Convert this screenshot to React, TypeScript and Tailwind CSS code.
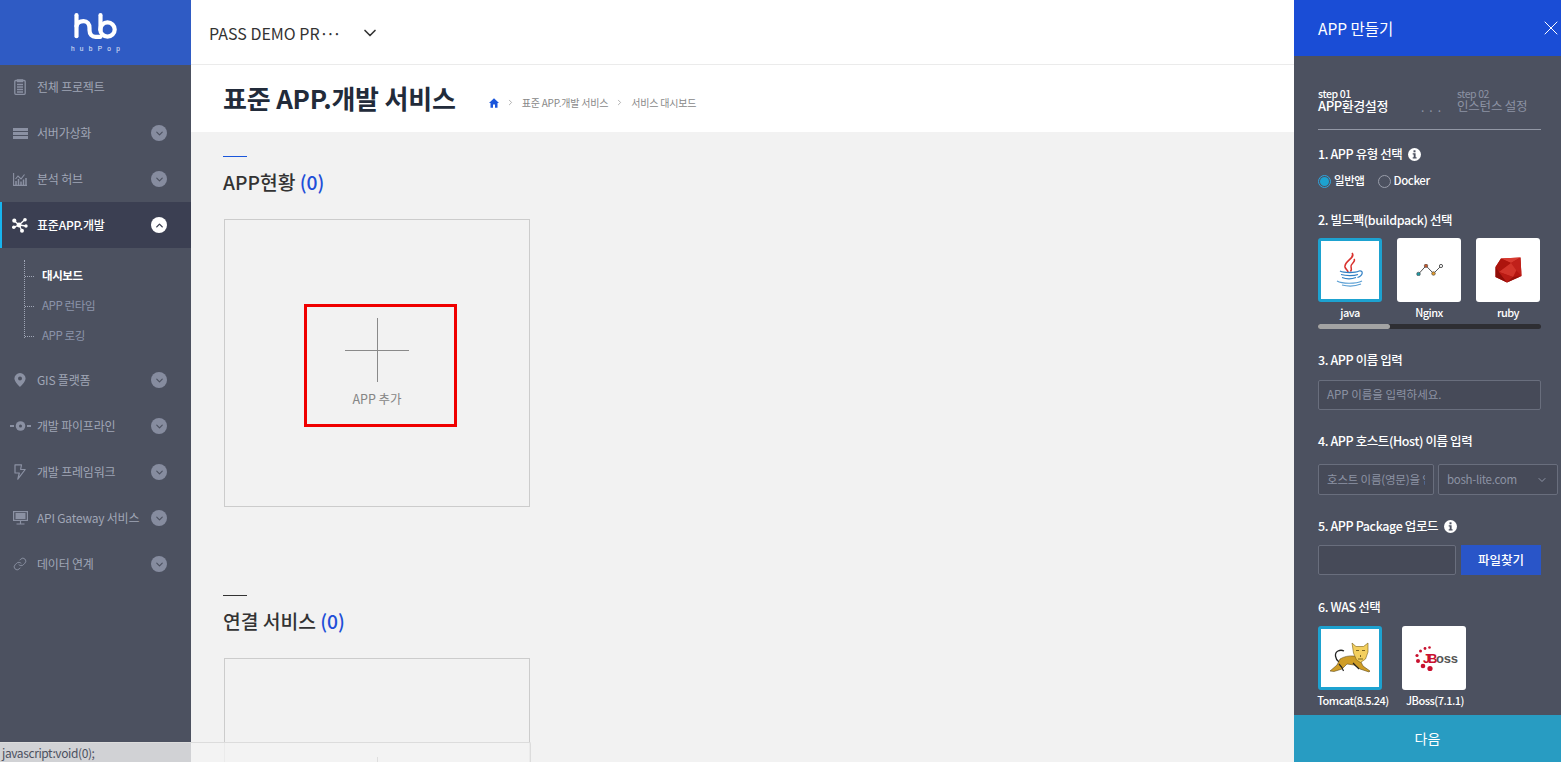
import React from "react";
import { ChevronDown, ChevronUp, ChevronRight, X, Link } from "lucide-react";

const ClipIcon = () => (
  <svg width="12" height="16" viewBox="0 0 12 16" fill="none" stroke="#8b91a3" strokeWidth="1.3">
    <rect x=".8" y="1.500" width="10.400" height="13.800" rx="1" />
    <path d="M3.500 1h5v1.600h-5zM3 5.500h6M3 8h6M3 10.500h6M3 13h6" />
  </svg>
);
const ServerIcon = () => (
  <svg width="15" height="11" viewBox="0 0 15 11" fill="#8b91a3">
    <rect x="0" y="0" width="15" height="3" />
    <rect x="0" y="4" width="15" height="3" />
    <rect x="0" y="8" width="15" height="3" />
  </svg>
);
const ChartIcon = () => (
  <svg width="14" height="13" viewBox="0 0 14 13" fill="none" stroke="#8b91a3" strokeWidth="1.100">
    <path d="M.6 0v12.400H14" />
    <path d="M2.500 6l2.500-3 3 3 3.500-4.500" />
    <path d="M3 12V8M5.500 12V6M8 12V8.500M10.500 12V6.500M13 12V5" strokeWidth="1.500" />
  </svg>
);
const NetIcon = () => (
  <svg width="16" height="15" viewBox="0 0 16 15" fill="#fff">
    <path d="M2.300 2.700L7 7l6-5.500M1.500 9.300L7 7l3 5.700M7 7l7 1" fill="none" stroke="#fff" strokeWidth="1.300" />
    <circle cx="2.300" cy="2.700" r="2.100" />
    <circle cx="13" cy="1.800" r="1.800" />
    <circle cx="1.800" cy="9.300" r="1.800" />
    <circle cx="7" cy="7" r="2.400" />
    <circle cx="10" cy="12.700" r="2" />
    <circle cx="14" cy="8" r="1.700" />
  </svg>
);
const PinIcon = () => (
  <svg width="12" height="14" viewBox="0 0 12 14">
    <path fillRule="evenodd" fill="#8b91a3" d="M6 0a5.600 5.600 0 0 1 5.600 5.600C11.600 9 6 14 6 14S.4 9 .4 5.600A5.600 5.600 0 0 1 6 0zm0 3.600a2 2 0 1 0 0 4 2 2 0 0 0 0-4z" />
  </svg>
);
const PipeIcon = () => (
  <svg width="21" height="10" viewBox="0 0 21 10">
    <path d="M0 4h4v2H0zM17 4h4v2h-4z" fill="#8b91a3" />
    <circle cx="10.500" cy="5" r="4.800" fill="#8b91a3" />
    <circle cx="10.500" cy="5" r="1.500" fill="#4c5160" />
  </svg>
);
const BoltIcon = () => (
  <svg width="12" height="16" viewBox="0 0 12 16" fill="none" stroke="#8b91a3" strokeWidth="1.200" strokeLinejoin="round">
    <path d="M1 .8h6.500L6.600 5.500h4.600L3.800 15.200 5.300 9H1z" />
  </svg>
);
const MonitorIcon = () => (
  <svg width="15" height="14" viewBox="0 0 15 14" fill="none" stroke="#8b91a3" strokeWidth="1.200">
    <rect x=".6" y=".6" width="13.800" height="8.800" />
    <rect x="2.500" y="2" width="10" height="6" fill="#8b91a3" stroke="none" />
    <path d="M7.500 9.500v3M3.500 13h8" />
  </svg>
);
const InfoIcon = () => (
  <svg width="13" height="13" viewBox="0 0 13 13">
    <circle cx="6.500" cy="6.500" r="6.500" fill="#fff" />
    <rect x="5.500" y="2.300" width="2" height="2" fill="#4c5160" />
    <path d="M4.700 5.300h2.900v4h1v1.300H4.700V9.300h1V6.600h-1z" fill="#4c5160" />
  </svg>
);
const HomeIcon = () => (
  <svg width="10" height="10" viewBox="0 0 10 10">
    <path d="M5 .3L10 5H8.500v4.700H6V6.500H4v3.200H1.500V5H0z" fill="#1a56db" />
  </svg>
);
const HubLogo = () => (
  <svg width="44" height="26" viewBox="0 0 44 26" fill="none" stroke="#fff" strokeWidth="4.200" strokeLinecap="round" strokeLinejoin="round">
    <path d="M2.500 2.200v21" />
    <path d="M2.500 13C3.500 9.500 6.500 8.200 9.500 8.200 13.500 8.200 15.500 11 15.500 15v2c0 4.500 2.500 6.800 6 6.800h5" />
    <path d="M26.500 2.200V17" />
    <circle cx="33.500" cy="16.500" r="7.200" />
  </svg>
);
const JavaLogo = () => (
  <svg width="40" height="40" viewBox="0 0 40 40" fill="none">
    <path d="M22 3c4 5-8 8-7 14 .5 2.500 3.500 3.500 3 5.500" stroke="#d9322e" strokeWidth="1.600" />
    <path d="M24 9c2.500 3-4 4.500-3 8 .6 2 1 2.500-.5 4.500" stroke="#d9322e" strokeWidth="1.500" />
    <path d="M10 21c4 2 15 2 19 0M11 24.500c5 1.500 13 1.500 17 0M12 27.500c4 1.500 10 1.500 14 0" stroke="#2f7fc4" strokeWidth="1.300" />
    <path d="M29 21c4.500-1 4.500 4.500-1.500 6.500" stroke="#2f7fc4" strokeWidth="1.200" />
    <path d="M7 31c5 3 19 3 25 0M12 35c6 1.500 14 1 19-1" stroke="#5a9fd4" strokeWidth="1.200" />
  </svg>
);
const NginxLogo = () => (
  <svg width="27" height="12" viewBox="0 0 27 12" fill="none">
    <path d="M2.500 10L10 1.800l7.500 7.700L25 2" stroke="#555" strokeWidth="1" />
    <circle cx="2.500" cy="10" r="1.800" fill="#1f9aa5" stroke="#444" strokeWidth=".6" />
    <circle cx="10" cy="1.800" r="1.700" fill="#c8562a" stroke="#444" strokeWidth=".6" />
    <circle cx="17.500" cy="9.500" r="1.800" fill="#e09a2b" stroke="#444" strokeWidth=".6" />
    <circle cx="25" cy="2" r="1.600" fill="#fff" stroke="#444" strokeWidth=".9" />
  </svg>
);
const RubyLogo = () => (
  <svg width="27" height="26" viewBox="0 0 27 26">
    <path d="M6 1.500L25.500.5l1 18.500L12 25.500.5 20V10z" fill="#b5150f" />
    <path d="M6 1.500L16 6 25.500.5z" fill="#d83a30" />
    <path d="M6 1.500L.5 10 4 15 16 6z" fill="#ad140d" />
    <path d="M4 15l14 5 7-14-9 0z" fill="#d2342a" />
    <path d="M25.500.5L16 6l5 7 5.500 6z" fill="#c0201a" />
    <path d="M.5 10L4 15l8 10.500L.5 20z" fill="#8f0d08" />
    <path d="M4 15l8 10.500 6-5.500z" fill="#b91b14" />
    <path d="M18 20l8.500-1L12 25.500z" fill="#96100a" />
  </svg>
);
const TomcatLogo = () => (
  <svg width="50" height="40" viewBox="0 0 50 40" fill="none">
    <path d="M14 24c-4-3-5-9-1-11 2-1 4-1 6 0" stroke="#222" strokeWidth="1.300" />
    <path d="M15 21c4-2.500 9-3.500 14-3l6 4 3 6 7 5-1 1-9-3-6-4-7-1-5 5-8 2.500-4-.5 7-6z" fill="#cf9d26" stroke="#4a3708" strokeWidth=".5" />
    <path d="M14 26c2 2 4 5 4.500 7M28 25l6 6" stroke="#222" strokeWidth="1.100" />
    <path d="M27 5l4 3.500h7.500L43 5v9l-2.500 7-5 3.500-4-2.500-3-7z" fill="#f3cf5e" stroke="#7a6012" strokeWidth=".6" />
    <path d="M31 12.500h3M37 12.500h3M35.500 17v2M33 21h5" stroke="#5c4a10" strokeWidth=".8" />
  </svg>
);
const JBossLogo = () => (
  <div className="relative ml-[4px] mt-[2px] h-[26px] w-[42px]">
    <svg width="24" height="26" viewBox="0 0 24 26" fill="#c8102e" className="absolute left-0 top-0">
      <circle cx="14.500" cy="1.500" r="1.300" />
      <circle cx="10" cy="2.500" r="1.400" />
      <circle cx="5.500" cy="5" r="1.500" />
      <circle cx="2" cy="9.500" r="1.600" />
      <circle cx="3" cy="15" r="2" />
      <circle cx="8" cy="20" r="2.300" />
      <circle cx="15" cy="22.500" r="2.600" />
    </svg>
    <span className="absolute left-[8px] top-[3px] font-['Liberation_Sans',sans-serif] text-[13px] font-bold leading-[20px] text-[#c8102e]">J</span>
    <span className="absolute left-[13px] top-[3px] font-['Liberation_Sans',sans-serif] text-[13px] font-bold leading-[20px] text-[#c8102e]">B</span>
    <span className="absolute left-[21px] top-[3px] font-['Liberation_Sans',sans-serif] text-[13px] font-bold leading-[20px] tracking-[-0.2px] text-[#555]">oss</span>
  </div>
);

const Circle = ({ open }: { open?: boolean }) => (
  <span className={`flex h-[16px] w-[16px] items-center justify-center rounded-full ${open ? "bg-white" : "bg-[#868c9f]"}`}>
    {open ? (
      <ChevronUp size={11} strokeWidth={3} className="text-[#3b3f52]" />
    ) : (
      <ChevronDown size={11} strokeWidth={2.500} className="text-[#4c5160]" />
    )}
  </span>
);

const NavRow = ({ icon, label, chevron = true, active = false, className = "h-[46px]" }: { icon: React.ReactNode; label: string; chevron?: boolean; active?: boolean; className?: string }) => (
  <div className={`flex items-center border-l-2 pr-[24px] ${className} ${active ? "border-[#17b4ee] bg-[#3b3f52] text-white font-medium" : "border-transparent text-[#a0a6b6]"}`}>
    <span className="flex w-[35px] justify-center pl-[1px]">{icon}</span>
    <span className="flex-1 whitespace-nowrap text-[12px] tracking-[-0.2px]">{label}</span>
    {chevron && <Circle open={active} />}
  </div>
);

const SubRow = ({ label, on = false }: { label: string; on?: boolean }) => (
  <div className="flex h-[30px] items-center">
    <span className="w-[9px] border-t border-dotted border-[#a0a6b6]" />
    <span className={`ml-[8px] text-[11.500px] tracking-[-0.4px] ${on ? "font-bold text-white" : "text-[#8d95ab]"}`}>{label}</span>
  </div>
);

const Title = ({ className = "", children }: { className?: string; children: React.ReactNode }) => (
  <div className={`flex h-[20px] items-center gap-[6px] text-[12.500px] font-medium leading-[20px] tracking-[-0.4px] text-white ${className}`}>{children}</div>
);

const Tile = ({ label, on = false, children, labelClass = "" }: { label: string; on?: boolean; children: React.ReactNode; labelClass?: string }) => (
  <div className="flex w-[64px] flex-col items-center">
    <div className={`flex h-[64px] w-[64px] items-center justify-center rounded-[3px] bg-white ${on ? "border-[3px] border-[#1da2d0]" : ""}`}>{children}</div>
    <div className={`mt-[2px] whitespace-nowrap text-[11px] font-medium leading-[16px] tracking-[-0.5px] text-white ${labelClass}`}>{label}</div>
  </div>
);

const AddCard = ({ className = "" }: { className?: string }) => (
  <div className={`ml-[1px] flex h-[288px] w-[306px] shrink-0 flex-col items-center justify-start border border-[#cccccc] pt-[98px] ${className}`}>
    <div className="relative h-[64px] w-[64px]">
      <span className="absolute left-0 top-[32px] h-px w-[64px] bg-[#8a8a8a]" />
      <span className="absolute left-[32px] top-0 h-[64px] w-px bg-[#8a8a8a]" />
    </div>
    <div className="mt-[8px] text-[12.500px] leading-[18px] text-[#858585]">APP 추가</div>
  </div>
);

export default function App() {
  return (
    <div className="relative flex h-[762px] w-[1561px] overflow-hidden bg-[#f2f2f2] font-['Noto_Sans_CJK_KR','Noto_Sans',sans-serif]">
      <aside className="flex w-[191px] shrink-0 flex-col bg-[#4c5160]">
        <div className="flex h-[65px] shrink-0 flex-col items-center bg-[#2f5bc4] pt-[13px]">
          <HubLogo />
          <div className="mt-[6px] pl-[5px] font-['Liberation_Sans',sans-serif] text-[6.500px] leading-[7px] tracking-[5.300px] text-white/90">hubPop</div>
        </div>
        <NavRow className="h-[44px]" icon={<ClipIcon />} label="전체 프로젝트" chevron={false} />
        <div className="h-px" />
        <NavRow icon={<ServerIcon />} label="서버가상화" />
        <NavRow icon={<ChartIcon />} label="분석 허브" />
        <NavRow active icon={<NetIcon />} label="표준APP.개발" />
        <div className="mb-[19px] ml-[24px] mt-[12px] h-[78px] border-l border-dotted border-[#a0a6b6] pt-[1px]">
          <SubRow on label="대시보드" />
          <SubRow label="APP 런타임" />
          <SubRow label="APP 로깅" />
        </div>
        <NavRow icon={<PinIcon />} label="GIS 플랫폼" />
        <NavRow icon={<PipeIcon />} label="개발 파이프라인" />
        <NavRow icon={<BoltIcon />} label="개발 프레임워크" />
        <NavRow icon={<MonitorIcon />} label="API Gateway 서비스" />
        <NavRow icon={<Link size={14} strokeWidth={1.600} className="text-[#8b91a3]" />} label="데이터 연계" />
      </aside>

      <main className="flex min-w-0 flex-1 flex-col overflow-hidden">
        <div className="flex h-[65px] shrink-0 items-center border-b border-[#ebebeb] bg-white pl-[18px] pt-[2px]">
          <span className="w-[128px] whitespace-nowrap text-[16px] text-[#333]">PASS DEMO PR<span className="tracking-[-2.500px]">···</span></span>
          <ChevronDown size={20} strokeWidth={2} className="ml-[23px] text-[#333]" />
        </div>
        <div className="flex h-[67px] shrink-0 items-center bg-white pl-[32px]">
          <h1 className="-mt-[2px] text-[26px] font-bold leading-[34px] tracking-[-0.2px] text-[#222b3a]">표준 APP.개발 서비스</h1>
          <div className="ml-[33px] mt-[8px] flex items-center text-[10px] tracking-[-0.2px] text-[#888]">
            <HomeIcon />
            <ChevronRight size={9} className="mx-[7px] text-[#999]" />
            <span>표준 APP.개발 서비스</span>
            <ChevronRight size={9} className="mx-[7px] text-[#999]" />
            <span>서비스 대시보드</span>
          </div>
        </div>
        <div className="flex flex-col pl-[32px] pt-[24px]">
          <span className="h-px w-[24px] bg-[#1a56db]" />
          <div className="mt-[11px] h-[29px] text-[19.250px] font-medium leading-[29px] text-[#333]">
            APP현황 <span className="text-[#1f4fd8]">(0)</span>
          </div>
          <AddCard className="mt-[22px]" />
          <span className="mt-[88px] h-px w-[24px] bg-[#333]" />
          <div className="mt-[11px] h-[29px] text-[19.250px] font-medium leading-[29px] text-[#333]">
            연결 서비스 <span className="text-[#1f4fd8]">(0)</span>
          </div>
          <AddCard className="mt-[22px]" />
        </div>
      </main>

      <aside className="relative flex w-[267px] shrink-0 flex-col overflow-hidden bg-[#4c5160]">
        <div className="flex h-[56px] shrink-0 items-center bg-[#1a4dd6] pl-[24px] text-white">
          <span className="mt-[2px] flex-1 text-[15.500px] font-normal">APP 만들기</span>
          <X size={24} strokeWidth={1} className="-mr-[2px] shrink-0" />
        </div>
        <div className="flex flex-col pl-[24px]">
          <div className="mt-[32px] flex h-[42px] w-[223px] border-b border-[#9297a5]">
            <div className="w-[103px] text-white">
              <div className="text-[10.500px] font-medium leading-[11px] tracking-[-0.4px]">step 01</div>
              <div className="text-[13px] font-medium leading-[13px] tracking-[-0.4px]">APP환경설정</div>
            </div>
            <div className="w-[36px] pt-[12px] text-[12px] leading-[14px] tracking-[5px] text-[#8d93a4]">...</div>
            <div className="text-[#8d93a4]">
              <div className="text-[10.500px] leading-[11px] tracking-[-0.4px]">step 02</div>
              <div className="text-[12.500px] leading-[13px] tracking-[-0.2px]">인스턴스 설정</div>
            </div>
          </div>
          <Title className="mt-[14px]">1. APP 유형 선택 <InfoIcon /></Title>
          <div className="mt-[7px] flex h-[20px] items-center text-[11.500px] font-medium tracking-[-0.4px] text-white">
            <span className="flex h-[13px] w-[13px] items-center justify-center rounded-full border border-[#2ea6e0]">
              <span className="h-[9px] w-[9px] rounded-full bg-[#1da2d0]" />
            </span>
            <span className="ml-[3px]">일반앱</span>
            <span className="ml-[13px] h-[13px] w-[13px] rounded-full border border-[#9a9eab]" />
            <span className="ml-[3px]">Docker</span>
          </div>
          <Title className="mt-[19px]">2. 빌드팩(buildpack) 선택</Title>
          <div className="mt-[8px] flex gap-[15px]">
            <Tile on label="java"><JavaLogo /></Tile>
            <Tile label="Nginx"><NginxLogo /></Tile>
            <Tile label="ruby"><RubyLogo /></Tile>
          </div>
          <div className="mt-[4px] h-[5px] w-[223px] rounded-full bg-[#2e2e33]">
            <div className="h-[5px] w-[72px] rounded-full bg-[#a3a3a3]" />
          </div>
          <Title className="mt-[21px]">3. APP 이름 입력</Title>
          <div className="mt-[10px] flex h-[30px] w-[223px] items-center rounded-[2px] border border-[#696e7d] bg-[#464a58] pl-[8px] text-[11.500px] text-[#8d93a4]">APP 이름을 입력하세요.</div>
          <Title className="mt-[21px]">4. APP 호스트(Host) 이름 입력</Title>
          <div className="mt-[13px] flex gap-[4px]">
            <div className="flex h-[31px] w-[116px] items-center rounded-[2px] border border-[#696e7d] bg-[#464a58] px-[8px] text-[11.500px] tracking-[-0.2px] text-[#8d93a4]">
              <span className="w-full overflow-hidden whitespace-nowrap">호스트 이름(영문)을 입력</span>
            </div>
            <div className="flex h-[31px] w-[120px] items-center rounded-[2px] border border-[#696e7d] bg-[#464a58] pl-[8px] pr-[9px] text-[11.500px] tracking-[-0.3px] text-[#8d93a4]">
              <span className="w-[71px] overflow-hidden whitespace-nowrap">bosh-lite.com</span>
              <ChevronDown size={12} className="ml-auto text-[#8d93a4]" />
            </div>
          </div>
          <Title className="mt-[21px]">5. APP Package 업로드 <InfoIcon /></Title>
          <div className="mt-[9px] flex gap-[5px]">
            <div className="h-[30px] w-[138px] rounded-[2px] border border-[#696e7d] bg-[#464a58]" />
            <button className="h-[30px] w-[80px] bg-[#2955c8] text-[12.500px] font-medium text-white">파일찾기</button>
          </div>
          <Title className="mt-[22px]">6. WAS 선택</Title>
          <div className="mt-[9px] flex gap-[20px]">
            <Tile on label="Tomcat(8.5.24)" labelClass="pl-[6px]"><TomcatLogo /></Tile>
            <Tile label="JBoss(7.1.1)" labelClass="pl-[2px]"><JBossLogo /></Tile>
          </div>
        </div>
        <button className="absolute bottom-0 left-0 h-[47px] w-full bg-[#289cc2] text-[14px] text-white">다음</button>
      </aside>

      <div className="absolute bottom-0 left-0 flex h-[20px] w-[531px] items-center rounded-tr-[2px] border-r border-t border-[#dcdcdc] bg-[#f2f2f2]/80 pl-[2px] text-[12px] tracking-[-0.4px] text-[#4c5160]">
        javascript:void(0);
      </div>
      <div className="absolute left-[304px] top-[304px] h-[123px] w-[153px] border-[3px] border-[#f00000]" />
    </div>
  );
}
